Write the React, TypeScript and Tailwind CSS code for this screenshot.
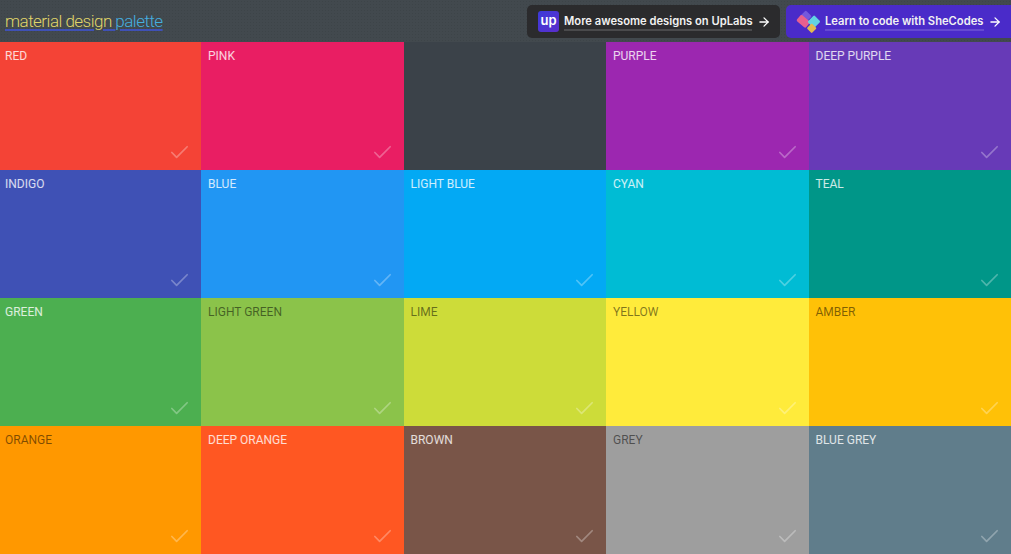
import { ArrowRight, Check } from "lucide-react"

const light = "text-white/80"
const dark = "text-black/50"

const swatches = [
  { name: "Red", bg: "bg-[#f44336]", text: light },
  { name: "Pink", bg: "bg-[#e91e63]", text: light },
  { name: "", bg: "bg-[#3b4249]", text: light },
  { name: "Purple", bg: "bg-[#9c27b0]", text: light },
  { name: "Deep Purple", bg: "bg-[#673ab7]", text: light },
  { name: "Indigo", bg: "bg-[#3f51b5]", text: light },
  { name: "Blue", bg: "bg-[#2196f3]", text: light },
  { name: "Light Blue", bg: "bg-[#03a9f4]", text: light },
  { name: "Cyan", bg: "bg-[#00bcd4]", text: light },
  { name: "Teal", bg: "bg-[#009688]", text: light },
  { name: "Green", bg: "bg-[#4caf50]", text: light },
  { name: "Light Green", bg: "bg-[#8bc34a]", text: dark },
  { name: "Lime", bg: "bg-[#cddc39]", text: dark },
  { name: "Yellow", bg: "bg-[#ffeb3b]", text: dark },
  { name: "Amber", bg: "bg-[#ffc107]", text: dark },
  { name: "Orange", bg: "bg-[#ff9800]", text: dark },
  { name: "Deep Orange", bg: "bg-[#ff5722]", text: light },
  { name: "Brown", bg: "bg-[#795548]", text: light },
  { name: "Grey", bg: "bg-[#9e9e9e]", text: dark },
  { name: "Blue Grey", bg: "bg-[#607d8b]", text: light },
]

function SheCodesLogo() {
  return (
    <svg viewBox="0 0 30 26" className="h-[26px] w-[30px] shrink-0">
      <rect x="7.5" y="3" width="8.5" height="8.5" rx="1.2" transform="rotate(45 11.7 7.3)" fill="#7458dc" />
      <rect x="3.3" y="8.3" width="12" height="8" rx="1.5" transform="rotate(40 9.3 12.3)" fill="#e85f8f" />
      <rect x="15.5" y="8" width="9" height="9.5" rx="1.2" transform="rotate(45 20 12.7)" fill="#62d3e2" />
      <rect x="14.2" y="15.8" width="7" height="7" rx="1" transform="rotate(45 17.7 19.3)" fill="#e3b950" />
    </svg>
  )
}

export default function App() {
  return (
    <div className="h-[554px] w-[1011px] overflow-hidden bg-[#42494e] font-['Liberation_Sans',sans-serif]">
      <header className="flex h-[42px] items-start justify-between bg-[radial-gradient(rgba(0,0,0,0.07)_0.7px,transparent_0.8px)] bg-[length:3px_3px]">
        <h1 className="ml-[5px] mt-[11px] font-['Roboto',sans-serif] text-[17px] font-light leading-[20px] tracking-[-0.52px] underline decoration-[#3f51b5] decoration-[1.5px] underline-offset-[2px]">
          <span className="text-[#e0d66a]">material design </span>
          <span className="text-[#45b0e0]">palette</span>
        </h1>
        <div className="mt-[5px] flex items-start gap-[6px]">
          <a className="flex h-[33px] w-[253px] items-center rounded-[5px] bg-[#2b2b2d] pl-[11px]">
            <span className="flex h-[21px] w-[21px] items-center justify-center rounded-[3px] bg-gradient-to-br from-[#3a3ad8] to-[#5a2dcc] pb-[2px] font-['Inter',sans-serif] text-[13px] font-semibold leading-none text-white">
              up
            </span>
            <span className="ml-[5px] w-[188px] whitespace-nowrap border-b-2 border-white/15 pb-[1px] pt-[1px] font-['Inter',sans-serif] text-[11.2px] font-semibold leading-[14px] text-[#f2f2f2]">
              More awesome designs on UpLabs
            </span>
            <ArrowRight className="ml-[5px] h-[14px] w-[14px] text-white" strokeWidth={2.2} />
          </a>
          <a className="flex h-[33px] w-[225px] items-center rounded-l-[5px] bg-[#4a2bc9] pl-[8px]">
            <SheCodesLogo />
            <span className="ml-[1px] w-[159px] whitespace-nowrap border-b-2 border-white/15 pb-[1px] pt-[1px] font-['Inter',sans-serif] text-[11.2px] font-semibold leading-[14px] text-[#f2f2f2]">
              Learn to code with SheCodes
            </span>
            <ArrowRight className="ml-[4px] h-[14px] w-[14px] text-white" strokeWidth={2.2} />
          </a>
        </div>
      </header>
      <div className="grid h-[512px] grid-cols-[201px_repeat(4,1fr)] grid-rows-4">
        {swatches.map((s, i) => (
          <div key={i} className={`relative py-[7px] ${i % 5 === 0 ? "pl-[5px]" : "pl-[7px]"} ${s.bg}`}>
            <div className={`font-['Roboto',sans-serif] text-[12px] uppercase leading-[14px] ${s.text}`}>{s.name}</div>
            {s.name && (
              <Check className="absolute bottom-[6px] right-[10px] h-[23px] w-[23px] text-white/30" strokeWidth={1.8} />
            )}
          </div>
        ))}
      </div>
    </div>
  )
}
